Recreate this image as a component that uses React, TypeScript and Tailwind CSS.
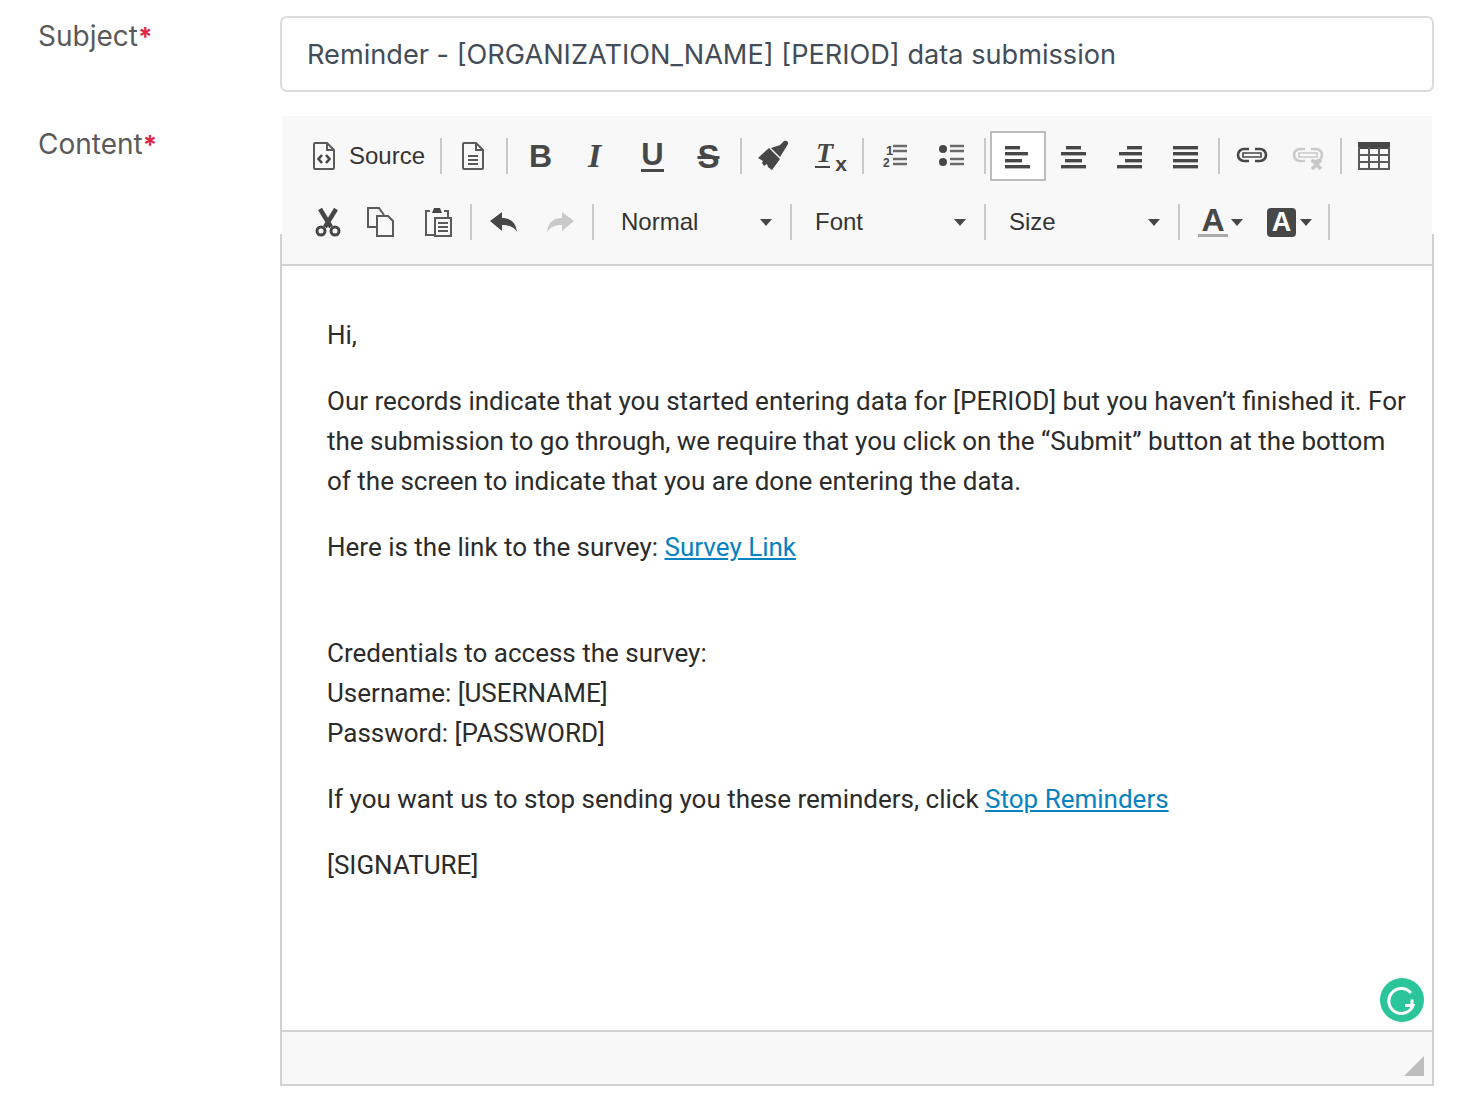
import type { ReactNode } from 'react'

const INK = '#474747'

const Sep = () => <div className="mx-[4px] h-[36px] w-[2px] shrink-0 bg-[#c9c9c9]" />

const Btn = ({ children, active = false }: { children: ReactNode; active?: boolean }) => (
  <div
    className={`flex h-[50px] w-[56px] shrink-0 items-center justify-center ${
      active ? 'border-2 border-[#bcbcbc] bg-white' : ''
    }`}
  >
    {children}
  </div>
)

const Icon = ({ children, size = 32 }: { children: ReactNode; size?: number }) => (
  <svg width={size} height={size} viewBox={`0 0 ${size} ${size}`} fill="none">
    {children}
  </svg>
)

const Caret = () => (
  <svg width="12" height="7" viewBox="0 0 12 7" className="shrink-0">
    <path d="M0 0h12L6 7z" fill={INK} />
  </svg>
)

const DocOutline = () => (
  <path d="M6 3h12l7 7v18a1 1 0 0 1-1 1H6a1 1 0 0 1-1-1V4a1 1 0 0 1 1-1zM18 3v7h7" stroke="#5a5a5a" strokeWidth="2" />
)

const Bars = ({ rows }: { rows: [number, number, number][] }) => (
  <Icon>
    {rows.map(([y, x, w]) => (
      <rect key={y} x={x} y={y} width={w} height="3.4" fill={INK} />
    ))}
  </Icon>
)

const Combo = ({ label, w, pl }: { label: string; w: string; pl: string }) => (
  <div className={`flex h-[50px] shrink-0 items-center justify-between pr-[14px] text-[24px] text-[#333] ${w} ${pl}`}>
    <span>{label}</span>
    <Caret />
  </div>
)

const Chain = ({ color }: { color: string }) => (
  <>
    <path d="M13 8H8a6 6 0 0 0 0 12h5M19 8h5a6 6 0 0 1 0 12h-5" stroke={color} strokeWidth="2.6" />
    <path d="M7 12h18v4H7z" stroke={color} strokeWidth="1.6" />
  </>
)

const Toolbar = () => (
  <div className="relative bg-[#f8f8f8] pb-[11px] pl-[15px] pt-[7px] font-['Liberation_Sans',sans-serif]">
    <div className="absolute bottom-0 left-[-2px] top-[118px] w-[2px] bg-[#d1d1d1]" />
    <div className="absolute bottom-0 right-[-2px] top-[118px] w-[2px] bg-[#d1d1d1]" />

    <div className="flex h-[66px] items-center">
      <div className="flex w-[139px] shrink-0 items-center gap-[9px] pl-[15px]">
        <Icon size={28}>
          <g transform="translate(-3 -2)">
            <DocOutline />
            <path d="M13 15l-3.500 4 3.500 4M17 15l3.500 4-3.500 4" stroke={INK} strokeWidth="2.6" />
          </g>
        </Icon>
        <span className="text-[24px] text-[#333]">Source</span>
      </div>
      <Sep />
      <Btn>
        <Icon>
          <DocOutline />
          <path d="M10 16h10M10 20h10M10 24h10" stroke="#5a5a5a" strokeWidth="2" />
        </Icon>
      </Btn>
      <Sep />
      <Btn>
        <span className="ml-[1px] text-[32px] font-bold leading-none text-[#474747]">B</span>
      </Btn>
      <Btn>
        <span className="mr-[3px] font-['Liberation_Serif',serif] text-[34px] font-bold italic leading-none text-[#474747]">I</span>
      </Btn>
      <Btn>
        <span className="ml-[1px] border-b-[3px] border-[#474747] text-[31px] font-bold leading-[28px] text-[#474747]">U</span>
      </Btn>
      <Btn>
        <span className="ml-[1px] text-[33px] font-bold leading-none text-[#474747] line-through">S</span>
      </Btn>
      <Sep />
      <Btn>
        <Icon>
          <path d="M0 18l11-10 11 11-8 11-4-3-1-3-3 2-2-3 1-2z" fill={INK} />
          <path d="M13 8l9 9 5-8 3-5c1-2-2-4-4-3l-4 4z" fill={INK} />
        </Icon>
      </Btn>
      <Btn>
        <div className="relative h-[32px] w-[30px]">
          <span className="absolute left-[1px] top-[-3px] font-['Liberation_Serif',serif] text-[28px] font-bold italic leading-[32px] text-[#474747]">T</span>
          <span className="absolute bottom-[4px] left-0 h-[2px] w-[15px] bg-[#474747]" />
          <span className="absolute bottom-[-1px] right-[-2px] text-[21px] font-bold leading-[18px] text-[#474747]">x</span>
        </div>
      </Btn>
      <Sep />
      <Btn>
        <Icon>
          <text x="6" y="15" fontSize="13" fontWeight="700" fill={INK} fontFamily="Liberation Sans">1</text>
          <text x="3" y="27" fontSize="12" fontWeight="700" fill={INK} fontFamily="Liberation Sans">2</text>
          <path d="M13 6h14M13 11h14M13 19h14M13 24h14" stroke={INK} strokeWidth="2.4" opacity=".8" />
        </Icon>
      </Btn>
      <Btn>
        <Icon>
          <circle cx="7" cy="9" r="4" fill={INK} />
          <circle cx="7" cy="22" r="4" fill={INK} />
          <path d="M14 6h14M14 11h14M14 19h14M14 24h14" stroke={INK} strokeWidth="2.4" opacity=".8" />
        </Icon>
      </Btn>
      <Sep />
      <Btn active>
        <Bars rows={[[6, 3, 15], [12, 3, 23], [19, 3, 17], [25, 3, 25]]} />
      </Btn>
      <Btn>
        <Bars rows={[[6, 8, 15], [12, 3, 25], [19, 7, 17], [25, 3, 25]]} />
      </Btn>
      <Btn>
        <Bars rows={[[6, 13, 15], [12, 5, 23], [19, 11, 17], [25, 3, 25]]} />
      </Btn>
      <Btn>
        <Bars rows={[[6, 3, 25], [12, 3, 25], [19, 3, 25], [25, 3, 25]]} />
      </Btn>
      <Sep />
      <Btn>
        <Icon>
          <g transform="translate(0 1)">
            <Chain color={INK} />
          </g>
        </Icon>
      </Btn>
      <Btn>
        <Icon>
          <g transform="translate(0 1)">
            <Chain color="#c9c9c9" />
          </g>
          <path d="M20 20l9 9M29 20l-9 9" stroke="#c9c9c9" strokeWidth="3.500" />
        </Icon>
      </Btn>
      <Sep />
      <Btn>
        <Icon>
          <rect y="2" width="32" height="7" fill={INK} />
          <path d="M1 7v22h30V7M1 15h30M1 22h30M11 7v22M21 7v22" stroke="#5a5a5a" strokeWidth="2" />
        </Icon>
      </Btn>
    </div>

    <div className="flex h-[66px] items-center pl-[1px]">
      <Btn>
        <Icon>
          <g transform="translate(3 0)">
            <path d="M7 3l11 18M23 3L12 21" stroke={INK} strokeWidth="4.500" />
            <circle cx="8" cy="25" r="4" stroke={INK} strokeWidth="3" />
            <circle cx="22" cy="25" r="4" stroke={INK} strokeWidth="3" />
          </g>
        </Icon>
      </Btn>
      <Btn>
        <Icon>
          <g transform="translate(-2 0)">
            <path d="M13 21H4V2h11l5 7M13 10v20h16V15l-5-5z" stroke="#5a5a5a" strokeWidth="2" />
          </g>
        </Icon>
      </Btn>
      <Btn>
        <Icon>
          <g transform="translate(1 0)">
            <path d="M7 5H3v24h8" stroke="#5a5a5a" strokeWidth="2" />
            <path d="M21 5h4v6" stroke="#5a5a5a" strokeWidth="2" />
            <path d="M9 7l2-5h6l2 5z" fill={INK} />
            <rect x="12" y="12" width="16" height="18" stroke="#5a5a5a" strokeWidth="2" />
            <path d="M15 17h10M15 21h10M15 25h10" stroke="#5a5a5a" strokeWidth="2" />
          </g>
        </Icon>
      </Btn>
      <Sep />
      <Btn>
        <Icon>
          <path d="M2 15L14 6v6c8 0 14 4 15 14-3-5-8-7-15-7v6z" fill={INK} />
        </Icon>
      </Btn>
      <Btn>
        <Icon>
          <path d="M30 15L18 6v6c-8 0-14 4-15 14 3-5 8-7 15-7v6z" fill="#c9c9c9" />
        </Icon>
      </Btn>
      <Sep />
      <Combo label="Normal" w="w-[188px]" pl="pl-[23px]" />
      <Sep />
      <Combo label="Font" w="w-[184px]" pl="pl-[19px]" />
      <Sep />
      <Combo label="Size" w="w-[184px]" pl="pl-[19px]" />
      <Sep />
      <div className="flex h-[50px] w-[70px] shrink-0 items-center pl-[13px]">
        <div className="flex w-[32px] flex-col items-center">
          <span className="text-[32px] font-bold leading-[26px] text-[#474747]">A</span>
          <span className="mt-[1px] h-[3px] w-[30px] bg-[#aaaaaa]" />
        </div>
        <span className="ml-[2px]">
          <Caret />
        </span>
      </div>
      <div className="flex h-[50px] w-[70px] shrink-0 items-center pl-[13px]">
        <div className="flex h-[29px] w-[29px] items-center justify-center rounded-[4px] bg-[#474747]">
          <span className="text-[27px] font-bold leading-none text-white">A</span>
        </div>
        <span className="ml-[4px]">
          <Caret />
        </span>
      </div>
      <Sep />
    </div>
  </div>
)

const Body = () => (
  <div className="relative h-[768px] border-y-2 border-[#d1d1d1] bg-white pl-[45px] pr-[20px] pt-[49px] font-['Roboto',sans-serif] text-[26px] leading-[40px] text-[#2b2b2b] [&_p]:mb-[26px]">
    <p>Hi,</p>
    <p>
      Our records indicate that you started entering data for [PERIOD] but you haven’t finished it. For the submission to go through, we require that you click on the “Submit” button at the bottom of the screen to indicate that you are done entering the data.
    </p>
    <p>
      Here is the link to the survey: <a className="text-[#0782c1] underline">Survey Link</a>
      <br />
      &nbsp;
    </p>
    <p>
      Credentials to access the survey:
      <br />
      Username: [USERNAME]
      <br />
      Password: [PASSWORD]
    </p>
    <p>
      If you want us to stop sending you these reminders, click <a className="text-[#0782c1] underline">Stop Reminders</a>
    </p>
    <p>[SIGNATURE]</p>
    <div className="absolute bottom-[8px] right-[8px] flex h-[44px] w-[44px] items-center justify-center rounded-full bg-[#2bc59b]">
      <svg width="32" height="32" viewBox="0 0 32 32" fill="none">
        <path d="M25 9A12.500 12.500 0 1 0 27 21.500H19" stroke="white" strokeWidth="3" />
        <path d="M26 15.500V24" stroke="white" strokeWidth="3" />
      </svg>
    </div>
  </div>
)

const Label = ({ text, className }: { text: string; className: string }) => (
  <div className={`w-[280px] shrink-0 pl-[38px] text-[28px] leading-[40px] text-[#5a5a5a] ${className}`}>
    {text}
    <span className="text-[26px] font-bold text-[#e0284a]">*</span>
  </div>
)

export default function App() {
  return (
    <div className="min-h-[1108px] bg-white pr-[28px] pt-[16px] font-['Inter',sans-serif]">
      <div className="flex">
        <Label text="Subject" className="pt-0" />
        <div className="flex h-[76px] flex-1 items-center rounded-[7px] border-2 border-[#dcdcdc] pl-[25px] pt-[2px] text-[27.15px] text-[#434d58]">
          Reminder - [ORGANIZATION_NAME] [PERIOD] data submission
        </div>
      </div>
      <div className="mt-[24px] flex">
        <Label text="Content" className="pt-[8px]" />
        <div className="flex-1 px-[2px]">
          <Toolbar />
          <div className="mx-[-2px] border-x-2 border-[#d1d1d1]">
            <div className="mt-[-2px]">
              <Body />
            </div>
            <div className="relative h-[54px] border-b-2 border-[#d1d1d1] bg-[#f8f8f8]">
              <svg width="20" height="20" viewBox="0 0 20 20" className="absolute bottom-[8px] right-[8px]">
                <path d="M20 0v20H0z" fill="#bdbdbd" />
              </svg>
            </div>
          </div>
        </div>
      </div>
    </div>
  )
}
